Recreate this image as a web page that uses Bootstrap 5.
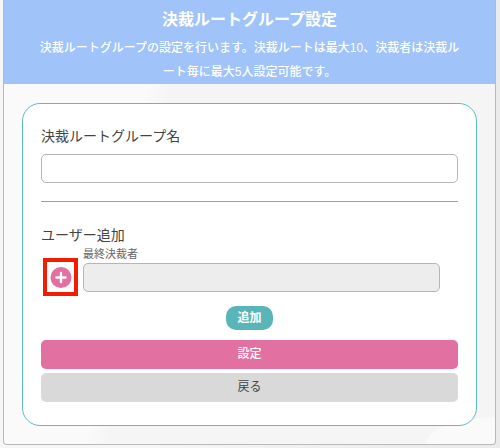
<!DOCTYPE html>
<html lang="ja">
<head>
<meta charset="utf-8">
<meta name="viewport" content="width=device-width, initial-scale=1">
<title>決裁ルートグループ設定</title>
<link href="https://cdn.jsdelivr.net/npm/bootstrap@5.3.0/dist/css/bootstrap.min.css" rel="stylesheet">
<style>
body{font-family:"Liberation Sans","Noto Sans CJK JP",sans-serif;font-size:14px;line-height:20px;color:#444;background:linear-gradient(100deg,#f6f6f6 40%,#ebebeb 90%)}
.page-wrap{padding:0 4px 3px 3px}
.panel{border:1px solid #b9b9b9;border-top:0;border-radius:0 0 4px 4px;background:radial-gradient(ellipse 70px 27px at 100% 100%,#fafafa 97%,transparent),linear-gradient(100deg,#fafafa 28%,#f5f5f5 32%)}
.panel-head{background:#a0c3f9;padding:8px 32px 0}
.panel-title{font-size:16px;line-height:24px;font-weight:700}
.lead-text{font-size:12px;line-height:24px;font-weight:500;padding:4px 0 0}
.panel-body{padding:19px 18px 18px}
.form-box{border:1px solid #5cbcc0;border-radius:18px;padding:18px 18px 23px}
.field{height:29px;border:1px solid #b5b5b5;border-radius:5px;font-size:12px;padding:4px 8px}
.field:disabled{background:#ededed}
.users{border-top:1px solid #5cbcc0;margin-top:18px;padding-top:23px}
.section-title{font-size:14px;line-height:20px}
.add-row{padding:0 18px 0 2px;gap:5px}
.small-label{font-size:11px;line-height:18px;color:#666}
.plus-btn{width:35px;height:38px;border:4px solid #f21d00;margin-bottom:-4px}
.plus-btn svg{width:22px;height:22px}
.add-wrap{padding:14px 0 10px}
.act{font-size:12px;line-height:19px;border:0;border-radius:5px;padding:5px}
.act-add{background:#5ab5b9;border-radius:10px;line-height:18px;padding:3px 11px;font-weight:700}
.act-set{background:#e270a1;font-weight:500}
.act-back{background:#d9d9d9;color:#444}
</style>
<script src="https://cdn.jsdelivr.net/npm/bootstrap@5.3.0/dist/js/bootstrap.bundle.min.js" defer></script>
</head>
<body>
<div class="page-wrap">
<main class="panel">
  <header class="panel-head text-white text-center">
    <h1 class="panel-title m-0">決裁ルートグループ設定</h1>
    <p class="lead-text m-0">決裁ルートグループの設定を行います。決裁ルートは最大10、決裁者は決裁ルート毎に最大5人設定可能です。</p>
  </header>
  <div class="panel-body">
    <form class="form-box bg-white">
      <label for="groupName" class="d-block mb-2 pt-1">決裁ルートグループ名</label>
      <input id="groupName" type="text" class="form-control field">
      <section class="users">
        <h2 class="section-title fw-normal m-0">ユーザー追加</h2>
        <div class="add-row d-flex align-items-end">
          <button type="button" class="plus-btn bg-white p-0 d-flex align-items-center justify-content-center flex-shrink-0" aria-label="決裁者を追加">
            <svg viewBox="0 0 22 22" aria-hidden="true"><circle cx="11" cy="11.5" r="10.5" fill="#e270a1"/><path d="M11 7v9M6.5 11.5h9" stroke="#fff" stroke-width="2.4" stroke-linecap="round"/></svg>
          </button>
          <div class="flex-grow-1">
            <label for="approver" class="small-label d-block">最終決裁者</label>
            <input id="approver" type="text" class="form-control field" disabled>
          </div>
        </div>
        <div class="add-wrap d-flex justify-content-center">
          <button type="button" class="btn act act-add text-white">追加</button>
        </div>
      </section>
      <div class="d-grid gap-1">
        <button type="submit" class="btn act act-set text-white">設定</button>
        <button type="button" class="btn act act-back">戻る</button>
      </div>
    </form>
  </div>
</main>
</div>
</body>
</html>
